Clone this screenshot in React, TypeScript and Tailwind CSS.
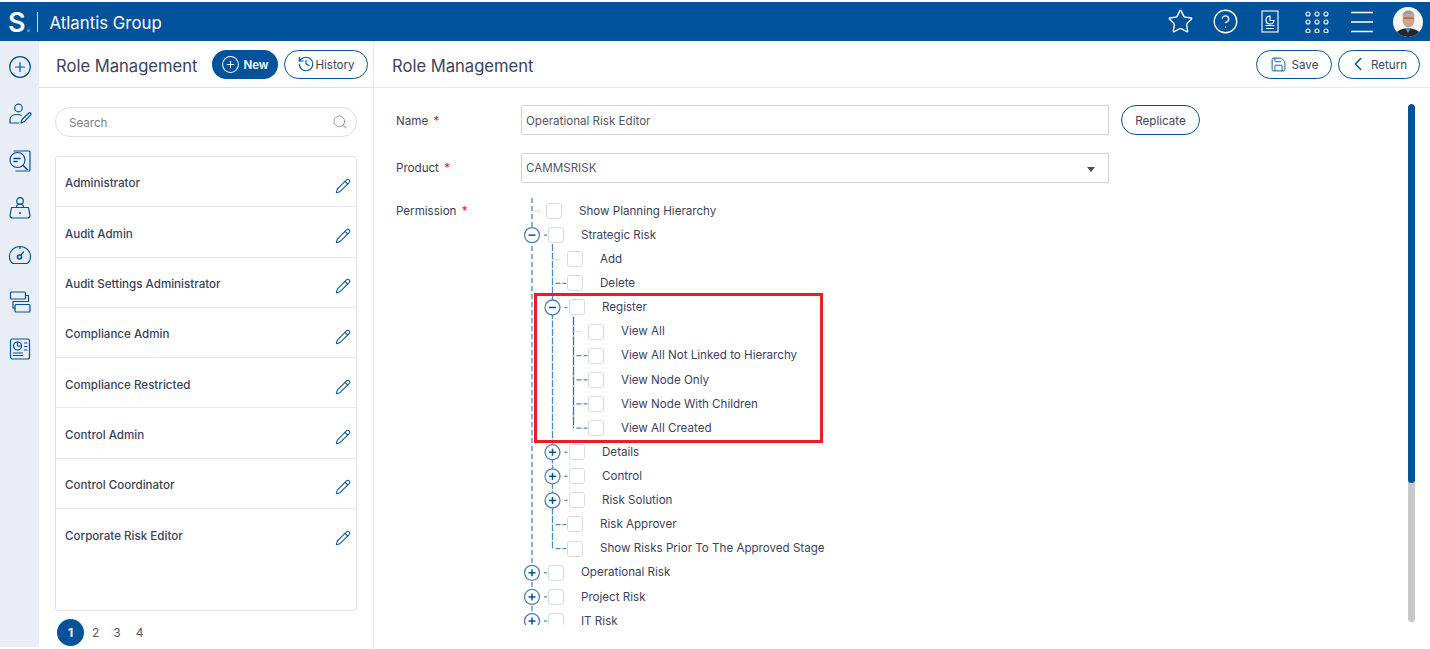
import React from "react";
import { History, Search, Save, ChevronLeft, Star, CircleHelp, Pencil, PlusCircle } from "lucide-react";

const BLUE = "#00529b";

type Row = { label: string; level: 0 | 1 | 2; kind: "leaf" | "open" | "closed"; first?: boolean };

const rows: Row[] = [
  { label: "Show Planning Hierarchy", level: 0, kind: "leaf", first: true },
  { label: "Strategic Risk", level: 0, kind: "open" },
  { label: "Add", level: 1, kind: "leaf", first: true },
  { label: "Delete", level: 1, kind: "leaf" },
  { label: "Register", level: 1, kind: "open" },
  { label: "View All", level: 2, kind: "leaf", first: true },
  { label: "View All Not Linked to Hierarchy", level: 2, kind: "leaf" },
  { label: "View Node Only", level: 2, kind: "leaf" },
  { label: "View Node With Children", level: 2, kind: "leaf" },
  { label: "View All Created", level: 2, kind: "leaf" },
  { label: "Details", level: 1, kind: "closed" },
  { label: "Control", level: 1, kind: "closed" },
  { label: "Risk Solution", level: 1, kind: "closed" },
  { label: "Risk Approver", level: 1, kind: "leaf" },
  { label: "Show Risks Prior To The Approved Stage", level: 1, kind: "leaf" },
  { label: "Operational Risk", level: 0, kind: "closed" },
  { label: "Project Risk", level: 0, kind: "closed" },
  { label: "IT Risk", level: 0, kind: "closed" },
];

const rowIndent: Record<string, string> = {
  "0leaf": "ml-[25px]",
  "0open": "ml-[27px]",
  "0closed": "ml-[27px]",
  "1leaf": "ml-[46px]",
  "1open": "ml-[48px]",
  "1closed": "ml-[48px]",
  "2leaf": "ml-[67px]",
};

const ROW_H = 24.12;
const TOP = 13;
const LINE = "#4f89c6";
const lineX = [11, 31.5, 52.5];

function TreeLines() {
  const y = (i: number) => TOP + i * ROW_H;
  return (
    <svg className="absolute left-0 top-0" width="320" height="440" fill="none">
      <line x1={lineX[0]} x2={lineX[0]} y1={0} y2={430} stroke={LINE} strokeWidth="1.3" strokeDasharray="5 3" />
      <line x1={lineX[1]} x2={lineX[1]} y1={y(1) + 9} y2={y(14)} stroke={LINE} strokeWidth="1.3" strokeDasharray="7 1.5" />
      <line x1={lineX[2]} x2={lineX[2]} y1={y(4) + 9} y2={y(9)} stroke="#2f72b8" strokeWidth="1.3" strokeDasharray="9 1" />
      {rows.map((r, i) => {
        const x = lineX[r.level];
        const c = y(i);
        if (r.kind === "leaf") {
          return r.first ? (
            <line key={i} x1={x} x2={x + 9} y1={c} y2={c} stroke="#c4c8d0" strokeWidth="1" strokeDasharray="2 1" />
          ) : (
            <path key={i} d={`M${x + 3} ${c}h5m2 0h4`} stroke={LINE} strokeWidth="1.3" />
          );
        }
        return (
          <g key={i}>
            <line x1={x + 12} x2={x + 15} y1={c} y2={c} stroke={LINE} strokeWidth="1.3" />
            <circle cx={x} cy={c} r="7.5" fill="#fff" stroke="#4f80bd" strokeWidth="1.3" />
            <line x1={x - 3.5} x2={x + 3.5} y1={c} y2={c} stroke={BLUE} strokeWidth="1.5" />
            {r.kind === "closed" && <line x1={x} x2={x} y1={c - 3.5} y2={c + 3.5} stroke={BLUE} strokeWidth="1.5" />}
          </g>
        );
      })}
    </svg>
  );
}

function TreeRow({ r }: { r: Row }) {
  return (
    <div className="relative flex h-[24.12px] items-center">
      <span className={`${rowIndent[r.level + r.kind]} h-4 w-4 shrink-0 rounded-[3px] border border-[#d5dbe6] bg-white`} />
      <span className="ml-[17px] mt-[1px] whitespace-nowrap text-[11.6px] leading-none text-[#3d4260]">{r.label}</span>
    </div>
  );
}

const roles = [
  "Administrator",
  "Audit Admin",
  "Audit Settings Administrator",
  "Compliance Admin",
  "Compliance Restricted",
  "Control Admin",
  "Control Coordinator",
  "Corporate Risk Editor",
];

function Side({ children }: { children: React.ReactNode }) {
  return (
    <svg width="24" height="24" viewBox="0 0 24 24" fill="none" stroke={BLUE} strokeWidth="1.2" strokeLinecap="round" strokeLinejoin="round">
      {children}
    </svg>
  );
}

function SideRail() {
  return (
    <aside className="flex h-[606px] w-[39px] shrink-0 flex-col items-center gap-[23px] bg-[#e9edf5] pt-[14px]">
      <Side>
        <circle cx="12" cy="12" r="10.3" />
        <path d="M12 7.5v9M7.5 12h9" />
      </Side>
      <Side>
        <circle cx="10.5" cy="6" r="3.8" />
        <path d="M2 21v-3.5C2 14.5 5 12.5 9 12.5c1.5 0 3 .3 4 .8M2 21h9" />
        <path d="M13 21l1-3.5 7-6.5c1-.8 2.6.8 1.8 1.8l-6.8 7z" />
      </Side>
      <Side>
        <path d="M6 2h15a1 1 0 0 1 1 1v18a1 1 0 0 1-1 1H8" />
        <circle cx="9.5" cy="11" r="7.5" />
        <path d="M6 9.5h6M6 12.5h3M15 16.5l4.5 4" strokeWidth="1.6" />
      </Side>
      <Side>
        <circle cx="12" cy="5" r="3.3" />
        <path d="M3.5 11.5h17l1.5 8a2.5 2.5 0 0 1-2.5 2.5h-15A2.5 2.5 0 0 1 2 19.5zM8.5 11.5c0-2 1.5-3.5 3.5-3.5s3.5 1.5 3.5 3.5" />
        <circle cx="12" cy="17" r=".5" />
      </Side>
      <Side>
        <path d="M5 20.5h14c2.5-1.5 3.5-4 3.5-7C22.5 8 18 3.5 12 3.5S1.5 8 1.5 13.5c0 3 1 5.5 3.5 7z" />
        <circle cx="11.5" cy="14" r="2" strokeWidth="1.6" />
        <path d="M13 12l2.5-3M12 3.5v2" />
      </Side>
      <Side>
        <rect x="2.5" y="2" width="15" height="7" rx="1" />
        <rect x="7" y="14.5" width="15" height="7.5" rx="1" />
        <path d="M17.5 5.5h3v6H5V18h2" />
      </Side>
      <Side>
        <rect x="2.5" y="2" width="19" height="20" rx="2" />
        <circle cx="9.5" cy="9" r="4" />
        <path d="M9.5 5v4h4M5.5 16h9M5.5 18.5h9M16.5 6h2.5M16.5 9.5h2.5M16.5 13h2.5" />
      </Side>
    </aside>
  );
}

function OutlineButton({ icon, label, className }: { icon: React.ReactNode; label: string; className: string }) {
  return (
    <button className={`flex h-[29px] items-center justify-center rounded-full border-[1.5px] border-[#00529b] bg-white text-[11.6px] text-[#3d4260] ${className}`}>
      {icon}
      <span className="pt-[3px]">{label}</span>
    </button>
  );
}

function Avatar() {
  return (
    <svg width="30" height="30" viewBox="0 0 30 30">
      <clipPath id="av"><circle cx="15" cy="15" r="15" /></clipPath>
      <g clipPath="url(#av)">
        <rect width="30" height="30" fill="#f7f5f3" />
        <path d="M2 30c0-6 5-8 13-9 8 1 13 3 13 9z" fill="#23252c" />
        <path d="M12 21l3 5 3-5z" fill="#5d86b8" />
        <ellipse cx="15.5" cy="12.5" rx="6" ry="8" fill="#d3a184" />
        <path d="M9.5 10c0-5 3-6.5 6-6.5s6 1.5 6 6.5c-1-2.5-2-3-6-3s-5 .5-6 3z" fill="#9a9a9a" />
        <rect x="10.5" y="10.5" width="10" height="1.2" fill="#7d6055" />
      </g>
    </svg>
  );
}

export default function App() {
  return (
    <div className="h-[649px] w-[1430px] overflow-hidden bg-white pt-[2px] font-['Inter',sans-serif] text-[#3d4260]">
      <header className="flex h-[39px] items-center bg-[#00529b] text-white">
        <span className="ml-[8px] pt-[1px] text-[27px] font-semibold leading-none">S</span>
        <span className="mt-[17px] ml-[1px] h-[3px] w-[3px] rounded-full bg-[#22a7e8]" />
        <span className="ml-[7px] h-[20px] w-px bg-white/80" />
        <span className="ml-[12px] pt-[4px] text-[16.8px]">Atlantis Group</span>
        <div className="ml-auto flex items-center">
          <Star size={27} strokeWidth={1.2} />
          <CircleHelp size={27} strokeWidth={1.2} className="ml-[18px]" />
          <svg className="ml-[22px]" width="18" height="23" viewBox="0 0 18 23" fill="none" stroke="#fff" strokeWidth="1.1">
            <rect x="1" y="1" width="16" height="21" />
            <path d="M4.5 15.5h9M5 18.5h8M9 6a4 4 0 1 0 4 4.5H9z" />
          </svg>
          <svg className="ml-[26px]" width="24" height="22" viewBox="0 0 24 22" fill="none" stroke="#fff" strokeWidth="1.1">
            {[3, 11, 20].map((y) =>
              [3, 12, 21].map((x) => <circle key={`${x}-${y}`} cx={x} cy={y} r="2" />)
            )}
          </svg>
          <svg className="ml-[21px]" width="24" height="22" viewBox="0 0 24 22" stroke="#fff" strokeWidth="1.3">
            <path d="M1 1.5h22M1 11h22M1 20.5h22" />
          </svg>
          <span className="ml-[19px] mr-[7px] flex"><Avatar /></span>
        </div>
      </header>

      <div className="flex">
        <SideRail />

        <section className="h-[608px] w-[335px] shrink-0 border-r border-[#e6e8ee]">
          <div className="flex h-[47px] items-center border-b border-[#dfe2ea] pl-[17px]">
            <h2 className="w-[141px] whitespace-nowrap pt-[4px] text-[16.6px] font-normal">Role Management</h2>
            <button className="ml-[15px] flex h-[29px] w-[66px] items-center justify-center gap-[3px] rounded-full bg-[#00529b] text-[11.6px] font-semibold text-white">
              <PlusCircle size={19} strokeWidth={1.3} />
              <span className="pt-[3px]">New</span>
            </button>
            <OutlineButton
              className="ml-[6px] w-[84px]"
              icon={<History size={18} strokeWidth={1.5} className="text-[#00529b]" />}
              label="History"
            />
          </div>

          <div className="px-[16px] pt-[19px]">
            <div className="flex h-[30px] w-[302px] items-center justify-between rounded-full border border-[#d9dde6] pl-[13px] pr-[8px]">
              <span className="pt-[3px] text-[11.6px] text-[#7d8088]">Search</span>
              <Search size={16} strokeWidth={1.3} className="text-[#8a8d94]" />
            </div>

            <ul className="mt-[19px] h-[455px] w-[302px] rounded-[3px] border border-[#dfe2ea]">
              {roles.map((role, i) => (
                <li
                  key={role}
                  className={`flex h-[50.3px] items-center justify-between pl-[9px] pr-[5px] pt-[5px] ${i < 7 ? "border-b border-[#e8e9ed]" : ""}`}
                >
                  <span className="text-[11.6px] font-medium text-[#3a3f5c]">{role}</span>
                  <Pencil size={16} strokeWidth={1.6} className="mt-[3px] text-[#0a5ba5]" />
                </li>
              ))}
            </ul>

            <div className="mt-[8px] flex items-center text-[12px] text-[#55585f]">
              <span className="ml-[2px] flex h-[27px] w-[27px] items-center justify-center rounded-full bg-[#00529b] font-bold text-white">1</span>
              <span className="ml-[8px]">2</span>
              <span className="ml-[14px]">3</span>
              <span className="ml-[15px]">4</span>
            </div>
          </div>
        </section>

        <main className="min-w-0 flex-1">
          <div className="flex h-[47px] items-center justify-between border-b border-[#e6e8ee] pl-[18px] pr-[10px]">
            <h2 className="whitespace-nowrap pt-[4px] text-[16.6px] font-normal">Role Management</h2>
            <div className="flex gap-[6px]">
              <OutlineButton className="w-[76px] gap-[5px]" icon={<Save size={17} strokeWidth={1.3} className="text-[#00529b]" />} label="Save" />
              <OutlineButton className="w-[82px] gap-[2px] pr-[4px]" icon={<ChevronLeft size={22} strokeWidth={1.5} className="text-[#00529b]" />} label="Return" />
            </div>
          </div>

          <div className="flex">
            <div className="w-[1033px] pl-[22px] pt-[17px]">
              <div className="flex items-center">
                <label className="w-[125px] pt-[3px] text-[11.6px]">Name <span className="ml-[2px] text-[#e0202a]">*</span></label>
                <div className="flex h-[30px] w-[588px] items-center rounded-[2px] border border-[#cfd3dc] pl-[4px] pt-[3px] text-[11.6px] text-[#55585f]">Operational Risk Editor</div>
                <button className="ml-[12px] h-[30px] w-[79px] rounded-full border-[1.5px] border-[#00529b] pt-[3px] text-[11.6px]">Replicate</button>
              </div>
              <div className="mt-[18px] flex items-center">
                <label className="w-[125px] pt-[2px] text-[11.6px]">Product <span className="ml-[2px] text-[#e0202a]">*</span></label>
                <div className="flex h-[30px] w-[588px] items-center justify-between rounded-[2px] border border-[#cfd3dc] pl-[4px] pr-[13px] pt-[2px] text-[11.6px] text-[#55585f]">
                  CAMMSRISK
                  <span className="h-0 w-0 border-x-[4px] border-t-[5px] border-x-transparent border-t-[#4a4d55]" />
                </div>
              </div>
              <div className="mt-[15px] flex">
                <label className="w-[125px] pt-[5px] text-[11.6px]">Permission <span className="ml-[2px] text-[#e0202a]">*</span></label>
                <div className="relative h-[427px] w-[320px] overflow-hidden pt-[1px]">
                  <TreeLines />
                  {rows.map((r) => (
                    <TreeRow key={r.label} r={r} />
                  ))}
                  <div className="absolute left-[13px] top-[95px] h-[150px] w-[289px] border-[3px] border-[#ee1c25]" />
                </div>
              </div>
            </div>
            <div className="ml-[1px] mt-[16px] flex h-[518px] w-[7px] flex-col overflow-hidden rounded-full bg-[#c9c9c9]">
              <div className="h-[379px] rounded-full bg-[#00529b]" />
            </div>
          </div>
        </main>
      </div>
    </div>
  );
}
